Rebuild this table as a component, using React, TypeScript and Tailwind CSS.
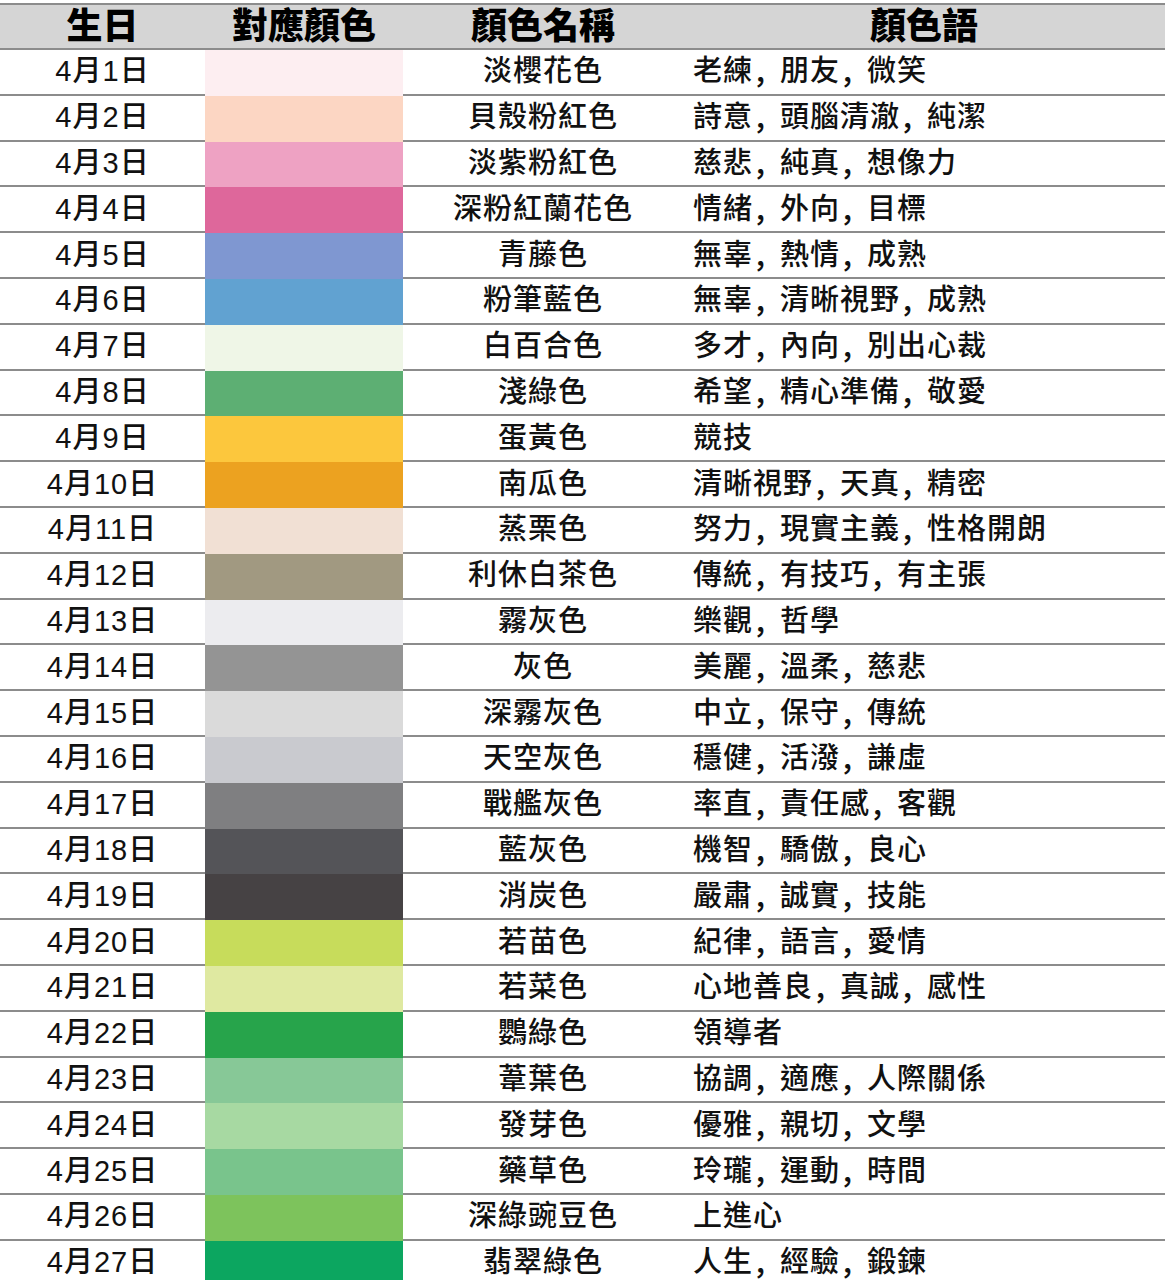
import React from 'react';

interface BirthColor {
  day: number;
  hex: string;
  name: string;
  words: string[];
}

const ROWS: BirthColor[] = [
  { day: 1, hex: '#fdeef1', name: '淡櫻花色', words: ['老練', '朋友', '微笑'] },
  { day: 2, hex: '#fcd6c3', name: '貝殼粉紅色', words: ['詩意', '頭腦清澈', '純潔'] },
  { day: 3, hex: '#eea2c3', name: '淡紫粉紅色', words: ['慈悲', '純真', '想像力'] },
  { day: 4, hex: '#de679b', name: '深粉紅蘭花色', words: ['情緒', '外向', '目標'] },
  { day: 5, hex: '#7f97d1', name: '青藤色', words: ['無辜', '熱情', '成熟'] },
  { day: 6, hex: '#61a2d1', name: '粉筆藍色', words: ['無辜', '清晰視野', '成熟'] },
  { day: 7, hex: '#eff6e7', name: '白百合色', words: ['多才', '內向', '別出心裁'] },
  { day: 8, hex: '#5daf73', name: '淺綠色', words: ['希望', '精心準備', '敬愛'] },
  { day: 9, hex: '#fcc73d', name: '蛋黃色', words: ['競技'] },
  { day: 10, hex: '#eca220', name: '南瓜色', words: ['清晰視野', '天真', '精密'] },
  { day: 11, hex: '#f1e0d4', name: '蒸栗色', words: ['努力', '現實主義', '性格開朗'] },
  { day: 12, hex: '#a19981', name: '利休白茶色', words: ['傳統', '有技巧', '有主張'] },
  { day: 13, hex: '#ececef', name: '霧灰色', words: ['樂觀', '哲學'] },
  { day: 14, hex: '#949494', name: '灰色', words: ['美麗', '溫柔', '慈悲'] },
  { day: 15, hex: '#dadada', name: '深霧灰色', words: ['中立', '保守', '傳統'] },
  { day: 16, hex: '#c9cacf', name: '天空灰色', words: ['穩健', '活潑', '謙虛'] },
  { day: 17, hex: '#7f7f81', name: '戰艦灰色', words: ['率直', '責任感', '客觀'] },
  { day: 18, hex: '#545458', name: '藍灰色', words: ['機智', '驕傲', '良心'] },
  { day: 19, hex: '#464244', name: '消炭色', words: ['嚴肅', '誠實', '技能'] },
  { day: 20, hex: '#c7dc5b', name: '若苗色', words: ['紀律', '語言', '愛情'] },
  { day: 21, hex: '#dfe9a1', name: '若菜色', words: ['心地善良', '真誠', '感性'] },
  { day: 22, hex: '#27a44b', name: '鸚綠色', words: ['領導者'] },
  { day: 23, hex: '#87c897', name: '葦葉色', words: ['協調', '適應', '人際關係'] },
  { day: 24, hex: '#a7d9a2', name: '發芽色', words: ['優雅', '親切', '文學'] },
  { day: 25, hex: '#79c48c', name: '藥草色', words: ['玲瓏', '運動', '時間'] },
  { day: 26, hex: '#7dc35c', name: '深綠豌豆色', words: ['上進心'] },
  { day: 27, hex: '#0ca660', name: '翡翠綠色', words: ['人生', '經驗', '鍛鍊'] },
];

const FONT = "font-['Liberation_Sans','Noto_Sans_CJK_TC',sans-serif]";

// comma in the picture sits at the bottom left, as the JP glyph does
const Words: React.FC<{ words: string[] }> = ({ words }) => (
  <>
    {words.map((w, i) => (
      <React.Fragment key={i}>
        {i > 0 && <span className="font-['Noto_Sans_CJK_JP',sans-serif] tracking-[-2px]">，</span>}
        {w}
      </React.Fragment>
    ))}
  </>
);

export default function App() {
  return (
    <div className={`bg-white min-h-screen pt-[3px] text-[#111] ${FONT}`}>
      <div className="w-[1165px]">
        {/* header */}
        <div className="flex h-[47px] items-center bg-[#d5d5d5] border-y-2 border-[#8c8c8c] text-[36px] font-black leading-none text-black">
          <div className="w-[205px] text-center">生日</div>
          <div className="w-[198px] text-center">對應顏色</div>
          <div className="w-[280px] text-center">顏色名稱</div>
          <div className="flex-1 text-center">顏色語</div>
        </div>

        {ROWS.map((r) => (
          <div key={r.day} className="flex h-[45.8px] text-[29px] font-medium leading-none tracking-[1px]">
            <div className="w-[205px] flex items-center justify-center border-b-2 border-[#8c8c8c]">
              4月{r.day}日
            </div>
            <div className="w-[198px]" style={{ backgroundColor: r.hex }} />
            <div className="w-[280px] flex items-center justify-center border-b-2 border-[#8c8c8c]">
              {r.name}
            </div>
            <div className="flex-1 flex items-center pl-[10px] border-b-2 border-[#8c8c8c] whitespace-nowrap">
              <Words words={r.words} />
            </div>
          </div>
        ))}
      </div>
    </div>
  );
}
